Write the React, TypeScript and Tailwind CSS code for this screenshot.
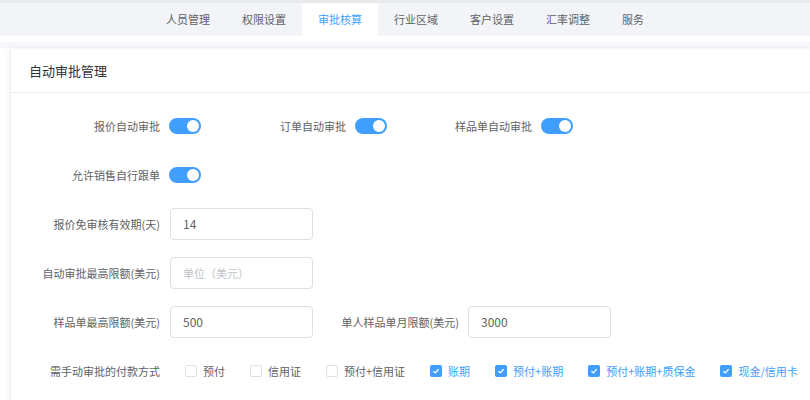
import React from 'react'

const tabs = ['人员管理', '权限设置', '审批核算', '行业区域', '客户设置', '汇率调整', '服务']

const payments = [
  { label: '预付', checked: false },
  { label: '信用证', checked: false },
  { label: '预付+信用证', checked: false },
  { label: '账期', checked: true },
  { label: '预付+账期', checked: true },
  { label: '预付+账期+质保金', checked: true },
  { label: '现金/信用卡', checked: true },
]

const Switch = () => (
  <span className='flex items-center w-[32px] h-[16px] rounded-full bg-[#409eff] justify-end px-[2px] shrink-0'>
    <span className='w-[12px] h-[12px] rounded-full bg-white'></span>
  </span>
)

const SwitchItem = ({ label }: { label: string }) => (
  <div className='flex items-center w-[186px] h-[32px]'>
    <label className='w-[158px] pr-[9px] text-right shrink-0 whitespace-nowrap'>{label}</label>
    <Switch />
  </div>
)

const Input = ({ value, placeholder }: { value?: string; placeholder?: string }) => (
  <div className='w-[143px] h-[32px] shrink-0 border border-[#dcdfe6] rounded-[4px] flex items-center px-[12px] bg-white text-[12px]'>
    {value ? <span className='text-[#606266]'>{value}</span> : <span className='text-[#c0c4cc] text-[11px]'>{placeholder}</span>}
  </div>
)

const Checkbox = ({ label, checked }: { label: string; checked: boolean }) => (
  <div className='flex items-center mr-[25px] shrink-0 whitespace-nowrap'>
    {checked ? (
      <span className='w-[12px] h-[12px] rounded-[2px] bg-[#409eff] flex items-center justify-center'>
        <svg width='8' height='8' viewBox='0 0 8 8'>
          <path d='M1.5 4.2 L3.3 5.9 L6.6 2.2' fill='none' stroke='white' strokeWidth='1.3' />
        </svg>
      </span>
    ) : (
      <span className='w-[12px] h-[12px] rounded-[2px] border border-[#dcdfe6] bg-white'></span>
    )}
    <span className={`ml-[6px] ${checked ? 'text-[#409eff]' : 'text-[#606266]'}`}>{label}</span>
  </div>
)

export default function App() {
  return (
    <div className='w-[810px] h-[400px] bg-white overflow-hidden text-[11px] text-[#606266]' style={{ fontFamily: '"Noto Sans CJK SC", "Noto Sans", sans-serif' }}>
      <div className='h-[36px] bg-[#f3f4f7] border-t-[3px] border-[#e8e9ed] flex justify-center'>
        {tabs.map((t) => (
          <div
            key={t}
            className={`px-[16px] flex items-center justify-center ${t === '审批核算' ? 'bg-white text-[#409eff]' : 'text-[#606266]'}`}
          >
            {t}
          </div>
        ))}
      </div>
      <div className='pt-[6px]'>
        <div className='h-[6px] bg-[#f7f8fb]'></div>
        <div className='ml-[10px] mt-[1px] bg-white shadow-[0_0_6px_rgba(0,0,0,0.08)] border-l border-[#eeeeee]'>
          <div className='h-[44px] flex items-center pl-[18px] border-b border-[#ebeef5] text-[13px] text-[#303133]'>自动审批管理</div>
          <div className='pt-[17px] pb-[40px] flex flex-col gap-[17px]'>
            <div className='flex'>
              <SwitchItem label='报价自动审批' />
              <SwitchItem label='订单自动审批' />
              <SwitchItem label='样品单自动审批' />
            </div>
            <div className='flex'>
              <SwitchItem label='允许销售自行跟单' />
            </div>
            <div className='flex items-center'>
              <label className='w-[159px] pr-[10px] text-right whitespace-nowrap'>报价免审核有效期(天)</label>
              <Input value='14' />
            </div>
            <div className='flex items-center'>
              <label className='w-[159px] pr-[10px] text-right whitespace-nowrap'>自动审批最高限额(美元)</label>
              <Input placeholder='单位（美元）' />
            </div>
            <div className='flex items-center'>
              <label className='w-[159px] pr-[10px] text-right whitespace-nowrap'>样品单最高限额(美元)</label>
              <Input value='500' />
              <label className='w-[155px] pr-[9px] text-right whitespace-nowrap'>单人样品单月限额(美元)</label>
              <Input value='3000' />
            </div>
            <div className='flex items-center h-[32px]'>
              <label className='w-[174px] pr-[25px] text-right whitespace-nowrap shrink-0'>需手动审批的付款方式</label>
              {payments.map((p) => (
                <Checkbox key={p.label} label={p.label} checked={p.checked} />
              ))}
            </div>
          </div>
        </div>
      </div>
    </div>
  )
}
